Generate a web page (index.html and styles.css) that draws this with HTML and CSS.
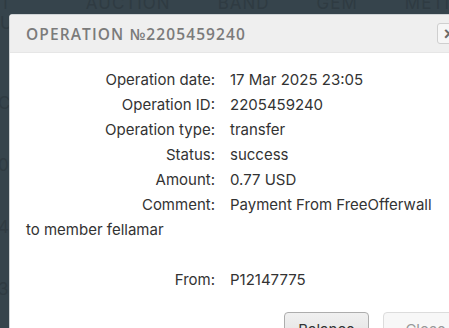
FILE: index.html
```html
<!DOCTYPE html>
<html lang="en">
<head>
    <meta charset="UTF-8">
    <meta name="viewport" content="width=device-width, initial-scale=1.0">
    <title>Operation</title>
    <link rel="stylesheet" href="styles.css">
</head>
<body>
    <div class="backdrop">
        <div class="nav">
            <span>T USD</span>
            <span>AUCTION</span>
            <span>BAND</span>
            <span>GEM</span>
            <span>METIS</span>
        </div>
        <div class="side">
            <span>C</span>
            <span>0</span>
            <span>4</span>
            <span>3</span>
        </div>
    </div>

    <div class="modal">
        <div class="modal-header">
            <h3 class="modal-title">Operation №2205459240</h3>
            <button class="close-x">&times;</button>
        </div>
        <div class="modal-body">
            <div class="row"><span class="label">Operation date:</span>17 Mar 2025 23:05</div>
            <div class="row"><span class="label">Operation ID:</span>2205459240</div>
            <div class="row"><span class="label">Operation type:</span>transfer</div>
            <div class="row"><span class="label">Status:</span>success</div>
            <div class="row"><span class="label">Amount:</span>0.77 USD</div>
            <div class="row"><span class="label">Comment:</span>Payment From FreeOfferwall to member fellamar</div>
            <div class="row spaced"><span class="label">From:</span>P12147775</div>
        </div>
        <div class="modal-footer">
            <button class="btn">Balance</button>
            <button class="btn btn-light">Close</button>
        </div>
    </div>
</body>
</html>
```

FILE: styles.css
```css
body {
    margin: 0;
    height: 100vh;
    overflow: hidden;
    background: #36444c;
    font-family: Inter, "Noto Sans", sans-serif;
}

.backdrop {
    color: #2f3b42;
    font-size: 17px;
    letter-spacing: 1px;
}

.nav {
    display: flex;
    gap: 47px;
    margin-top: -7px;
    height: 20px;
    line-height: 20px;
}

.side {
    display: flex;
    flex-direction: column;
    gap: 42px;
    margin-top: 80px;
    margin-left: -2px;
}

/* dialog over the page */
.modal {
    position: absolute;
    left: 9px;
    top: 14px;
    width: 460px;
    background: #fff;
    border: 1px solid #cfd3d5;
    border-radius: 3px;
}

.modal-header {
    display: flex;
    align-items: center;
    height: 37px;
    padding: 0 9px 0 16px;
    background: #efefef;
    border-bottom: 1px solid #e6e6e6;
}

.modal-title {
    margin: 0;
    font-family: "Open Sans", sans-serif;
    font-size: 15.5px;
    font-weight: 600;
    letter-spacing: 1.1px;
    text-transform: uppercase;
    color: #7b7b7b;
}

.close-x {
    margin-left: auto;
    width: 24px;
    height: 21px;
    padding: 0;
    border: 1px solid #cfcfcf;
    border-radius: 3px;
    background: #f6f6f6;
    color: #6a6a6a;
    font-size: 18px;
    font-weight: bold;
    line-height: 18px;
}

.modal-body {
    padding: 14px 16px 0 16px;
    font-size: 15px;
    line-height: 25px;
    color: #333;
}

.row {
    padding-right: 20px;
}

.row.spaced {
    margin-top: 25px;
}

.label {
    display: inline-block;
    width: 189px;
    margin-right: 15px;
    text-align: right;
}

.modal-footer {
    display: flex;
    gap: 14px;
    padding: 20px 0 0 0;
    margin-left: 274px;
}

.btn {
    width: 85px;
    height: 34px;
    font-family: Inter, sans-serif;
    font-size: 15px;
    color: #333;
    background: linear-gradient(#f0f0f0, #e0e0e0);
    border: 1px solid #adadad;
    border-radius: 4px;
}

.btn-light {
    background: #f7f7f7;
    border-color: #dcdcdc;
    color: #999;
}
```
